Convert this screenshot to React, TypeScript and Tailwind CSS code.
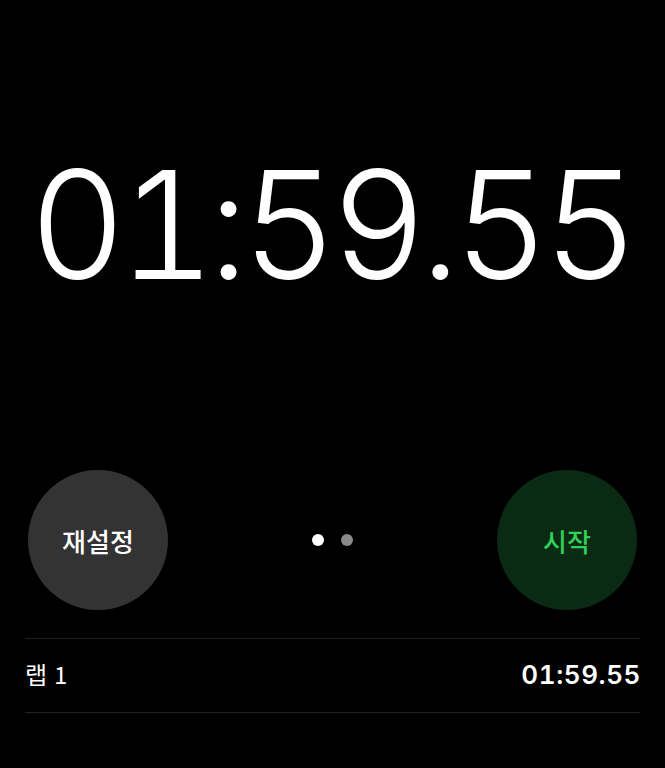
export default function App() {
  return (
    <div className="w-full h-screen bg-black overflow-hidden" style={{ fontFamily: 'Inter, "Noto Sans CJK KR", sans-serif' }}>
      <div className="h-[470px] flex items-center justify-center pb-[20px]">
        <div className="text-white text-[150px] font-light leading-none tabular-nums tracking-[-7.5px] pr-[4px]" style={{ fontFamily: 'Inter, sans-serif' }}>
          01:59.55
        </div>
      </div>
      <div className="h-[140px] px-[28px] flex items-center justify-between">
        <div className="w-[140px] h-[140px] rounded-full bg-[#333333] flex items-center justify-center text-white text-[26px] font-medium" style={{ fontFamily: '"Noto Sans CJK KR", sans-serif' }}>
          재설정
        </div>
        <div className="flex items-center gap-[17px]">
          <div className="w-[12px] h-[12px] rounded-full bg-white" />
          <div className="w-[12px] h-[12px] rounded-full bg-[#8a8a8a]" />
        </div>
        <div className="w-[140px] h-[140px] rounded-full bg-[#0b2a14] flex items-center justify-center text-[#31d158] text-[26px] font-medium" style={{ fontFamily: '"Noto Sans CJK KR", sans-serif' }}>
          시작
        </div>
      </div>
      <div className="mx-[25px] mt-[28px] border-t border-b border-[#222222] h-[75px] flex items-center justify-between">
        <div className="text-white text-[24px] -mt-[3px] flex gap-[7px]" style={{ fontFamily: '"Noto Sans CJK KR", sans-serif' }}>
          <span>랩</span>
          <span>1</span>
        </div>
        <div className="text-white text-[26px] font-semibold tabular-nums tracking-[0.6px] -mr-[1px] -mt-[2px]" style={{ fontFamily: 'Inter, sans-serif' }}>01:59.55</div>
      </div>
    </div>
  );
}
